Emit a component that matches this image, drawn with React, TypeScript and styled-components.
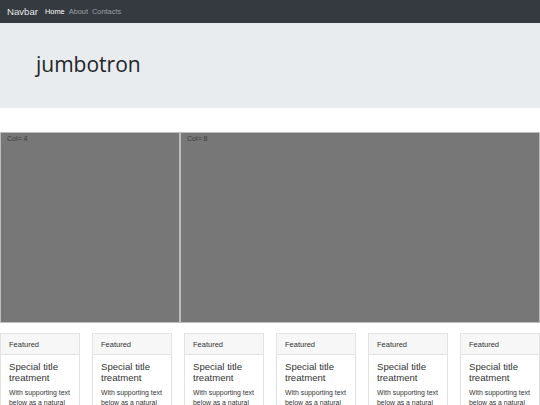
import React from "react";
import styled, { createGlobalStyle } from "styled-components";

const Global = createGlobalStyle`
  html, body { margin: 0; padding: 0; background: #fff; }
  body { font-family: "Liberation Sans", Arial, sans-serif; color: #212529; }
  * { box-sizing: border-box; }
`;

const Nav = styled.nav`
  height: 23px;
  background: #343a40;
  display: flex;
  align-items: center;
  padding: 0 7px;
  gap: 7px;
`;

const Brand = styled.span`
  font-size: 9.6px;
  color: rgba(255, 255, 255, 0.9);
`;

const Links = styled.div`
  display: flex;
  gap: 4px;
`;

const NavLink = styled.span<{ $active?: boolean }>`
  font-size: 7.4px;
  color: ${(p) => (p.$active ? "#fff" : "rgba(255,255,255,0.5)")};
`;

const Jumbo = styled.header`
  background: #e9ecef;
  height: 85px;
  display: flex;
  align-items: center;
  padding: 0 36px 3px;
`;

const JumboTitle = styled.h1`
  margin: 0;
  font-family: "Open Sans", "Noto Sans", sans-serif;
  font-weight: 400;
  font-size: 21px;
  color: #212529;
`;

const Row = styled.div`
  margin-top: 24px;
  display: grid;
  grid-template-columns: 180px 1fr;
  height: 191px;
`;

const Col = styled.div`
  background: #777;
  border: 1px solid #bcbcbc;
  font-size: 7px;
  color: #3c3c3c;
  padding: 2px 6px;
`;

const Cards = styled.div`
  margin-top: 10px;
  display: grid;
  grid-template-columns: repeat(6, 80px);
  gap: 12px;
`;

const Card = styled.div`
  border: 1px solid #e2e2e2;
  border-bottom: none;
  height: 80px;
  overflow: hidden;
  background: #fff;
`;

const CardHeader = styled.div`
  background: #f7f7f7;
  border-bottom: 1px solid #e2e2e2;
  height: 21px;
  display: flex;
  align-items: center;
  padding: 0 8px;
  font-size: 7.5px;
  color: #333;
`;

const CardBody = styled.div`
  padding: 6px 7px 0 8px;
`;

const CardTitle = styled.div`
  font-size: 9.6px;
  line-height: 11px;
  color: #333;
  margin-bottom: 5px;
`;

const CardText = styled.p`
  margin: 0;
  font-size: 6.9px;
  line-height: 9.5px;
  color: #333;
`;

export default function App() {
  return (
    <>
      <Global />
      <Nav>
        <Brand>Navbar</Brand>
        <Links>
          <NavLink $active>Home</NavLink>
          <NavLink>About</NavLink>
          <NavLink>Contacts</NavLink>
        </Links>
      </Nav>
      <Jumbo>
        <JumboTitle>jumbotron</JumboTitle>
      </Jumbo>
      <Row>
        <Col>Col= 4</Col>
        <Col>Col= 8</Col>
      </Row>
      <Cards>
        {Array.from({ length: 6 }).map((_, i) => (
          <Card key={i}>
            <CardHeader>Featured</CardHeader>
            <CardBody>
              <CardTitle>Special title treatment</CardTitle>
              <CardText>With supporting text below as a natural lead-in to additional content.</CardText>
            </CardBody>
          </Card>
        ))}
      </Cards>
    </>
  );
}
